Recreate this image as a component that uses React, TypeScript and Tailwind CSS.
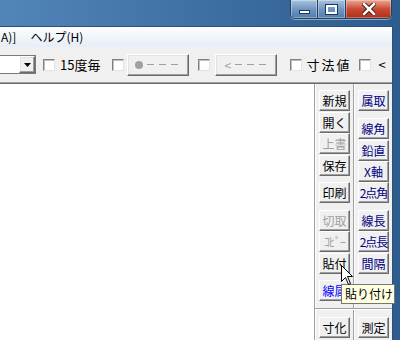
import React from 'react';

const btn =
  'h-[21px] w-[31px] flex items-center justify-center bg-[#f0f0f0] border border-t-[#ffffff] border-l-[#ffffff] border-r-[#6a6a6a] border-b-[#6a6a6a] shadow-[inset_-1px_-1px_0_#a0a0a0] text-[12px] leading-none whitespace-nowrap';

const chk =
  'w-[12px] h-[12px] bg-white border border-t-[#808080] border-l-[#808080] border-r-[#e3e3e3] border-b-[#e3e3e3] shadow-[inset_1px_1px_0_#c0c0c0]';

const raised =
  'bg-[#f0f0f0] border border-t-[#ffffff] border-l-[#ffffff] border-r-[#6a6a6a] border-b-[#6a6a6a] shadow-[inset_-1px_-1px_0_#a0a0a0,inset_1px_1px_0_#e3e3e3]';

const Dashes = () => (
  <div className="flex items-center gap-[5px]">
    <div className="w-[7px] h-[1px] bg-[#a0a0a0]" />
    <div className="w-[7px] h-[1px] bg-[#a0a0a0]" />
    <div className="w-[7px] h-[1px] bg-[#a0a0a0]" />
  </div>
);

const ColSep = () => <div className="w-[2px] self-stretch ml-[3px] mr-[3px] border-l border-[#a0a0a0] bg-white" />;

export default function App() {
  return (
    <div className="relative w-[400px] h-[340px] overflow-hidden flex flex-col bg-gradient-to-r from-[#5285ba] via-[#3f70a3] to-[#2d5c8e] font-['Noto_Sans_CJK_JP',sans-serif] text-black">
      {/* title bar */}
      <div className="h-[26px] flex justify-end pr-[8px] shrink-0">
        <div className="flex h-[19px] border border-t-0 border-[#24405f] rounded-b-[5px] overflow-hidden shadow-[0_1px_0_rgba(255,255,255,0.45)]">
          <div className="w-[27px] flex items-center justify-center border-r border-[#24405f] bg-gradient-to-b from-[#a9c3de] via-[#7097c2] to-[#4f7cad] shadow-[inset_0_0_0_1px_rgba(255,255,255,0.35)]">
            <div className="w-[11px] h-[4px] mt-[6px] bg-white border border-[#1f3856]" />
          </div>
          <div className="w-[28px] flex items-center justify-center border-r border-[#24405f] bg-gradient-to-b from-[#a9c3de] via-[#7097c2] to-[#4f7cad] shadow-[inset_0_0_0_1px_rgba(255,255,255,0.35)]">
            <div className="w-[11px] h-[9px] border-2 border-white outline outline-1 outline-[#1f3856]" />
          </div>
          <div className="w-[45px] flex items-center justify-center bg-gradient-to-b from-[#e9a795] via-[#c84a33] to-[#b02e1a] shadow-[inset_0_0_0_1px_rgba(255,255,255,0.3)]">
            <svg width="14" height="12" viewBox="0 0 14 12">
              <path d="M2 1 L12 11 M12 1 L2 11" stroke="#4a1a12" strokeWidth="4.5" strokeLinecap="square" />
              <path d="M2 1 L12 11 M12 1 L2 11" stroke="#ffffff" strokeWidth="2.5" strokeLinecap="square" />
            </svg>
          </div>
        </div>
      </div>

      {/* client area */}
      <div className="flex-1 min-h-0 mr-[7px] flex flex-col border-t border-r border-[#2f4f75] bg-[#f0f0f0]">
        {/* menu */}
        <div className="h-[20px] shrink-0 flex items-center text-[12px] leading-none bg-gradient-to-b from-[#fcfdfe] to-[#e6edf6]">
          <span className="ml-[1px]">A)]</span>
          <span className="ml-[14px]">ヘルプ(H)</span>
        </div>

        {/* toolbar */}
        <div className="h-[36px] shrink-0 flex items-center text-[13px] leading-none border-b border-[#a0a0a0] whitespace-nowrap">
          <div className="w-[36px] h-[19px] flex justify-end bg-white border border-l-0 border-[#7a7a7a]">
            <div className={`w-[16px] h-full flex items-center justify-center ${raised}`}>
              <svg width="7" height="4" viewBox="0 0 7 4">
                <path d="M0 0 H7 L3.5 4 Z" fill="#000" />
              </svg>
            </div>
          </div>
          <div className={`${chk} ml-[7px]`} />
          <span className="ml-[5px]">15度毎</span>
          <div className={`${chk} ml-[12px]`} />
          <div className={`ml-[3px] w-[62px] h-[22px] flex items-center pl-[7px] gap-[4px] ${raised}`}>
            <div className="w-[8px] h-[8px] rounded-full bg-[#a0a0a0]" />
            <Dashes />
          </div>
          <div className={`${chk} ml-[9px]`} />
          <div className={`ml-[5px] w-[62px] h-[22px] flex items-center pl-[8px] gap-[4px] text-[#a0a0a0] ${raised}`}>
            <span className="text-[12px]">&lt;</span>
            <Dashes />
          </div>
          <div className={`${chk} ml-[13px]`} />
          <span className="ml-[4px] tracking-[2px]">寸法値</span>
          <div className={`${chk} ml-[8px]`} />
          <span className="ml-[7px]">&lt;</span>
        </div>

        {/* work area */}
        <div className="flex-1 min-h-0 flex border-t border-[#6a6a6a]">
          <div className="w-[314px] bg-white" />
          <div className="flex-1 flex flex-col border-l border-[#a0a0a0] shadow-[inset_1px_0_0_#ffffff]">
            <div className="h-[224px] flex pl-[4px]">
              <div className="flex flex-col">
                <div className={`${btn} mt-[6px]`}>新規</div>
                <div className={`${btn} mt-[1px]`}>開く</div>
                <div className={`${btn} text-[#a0a0a0]`}>上書</div>
                <div className={`${btn} mt-[1px]`}>保存</div>
                <div className={`${btn} mt-[6px]`}>印刷</div>
                <div className={`${btn} mt-[7px] text-[#a0a0a0]`}>切取</div>
                <div className={`${btn} text-[#a0a0a0] tracking-[-1px]`}>ｺﾋﾟｰ</div>
                <div className={`${btn} mt-[1px]`}>貼付</div>
                <div className={`${btn} mt-[6px] text-[#0000ff]`}>線属</div>
              </div>
              <ColSep />
              <div className="flex flex-col text-[#00007f]">
                <div className={`${btn} mt-[6px]`}>属取</div>
                <div className={`${btn} mt-[7px]`}>線角</div>
                <div className={`${btn} mt-[1px]`}>鉛直</div>
                <div className={btn}>X軸</div>
                <div className={`${btn} tracking-[-1px]`}>2点角</div>
                <div className={`${btn} mt-[7px]`}>線長</div>
                <div className={`${btn} tracking-[-1px]`}>2点長</div>
                <div className={`${btn} mt-[1px]`}>間隔</div>
              </div>
            </div>
            <div className="h-[2px] border-t border-[#a0a0a0] bg-white" />
            <div className="flex-1 flex pl-[4px]">
              <div className="flex flex-col">
                <div className={`${btn} mt-[7px]`}>寸化</div>
              </div>
              <ColSep />
              <div className="flex flex-col">
                <div className={`${btn} mt-[7px]`}>測定</div>
              </div>
            </div>
          </div>
        </div>
      </div>

      {/* tooltip */}
      <div className="absolute left-[341px] top-[284px] w-[54px] h-[20px] flex items-center pl-[3px] bg-[#ffffe1] border border-[#767676] text-[12px] leading-none whitespace-nowrap">
        貼り付け
      </div>

      {/* mouse cursor */}
      <svg className="absolute left-[341px] top-[265px]" width="13" height="21" viewBox="0 0 13 21">
        <path d="M0.5 0.5 L0.5 16.5 L4.5 12.5 L7.5 19.5 L9.5 18.5 L6.5 11.5 L11.5 11.5 Z" fill="#ffffff" stroke="#000000" strokeWidth="1" />
      </svg>
    </div>
  );
}
